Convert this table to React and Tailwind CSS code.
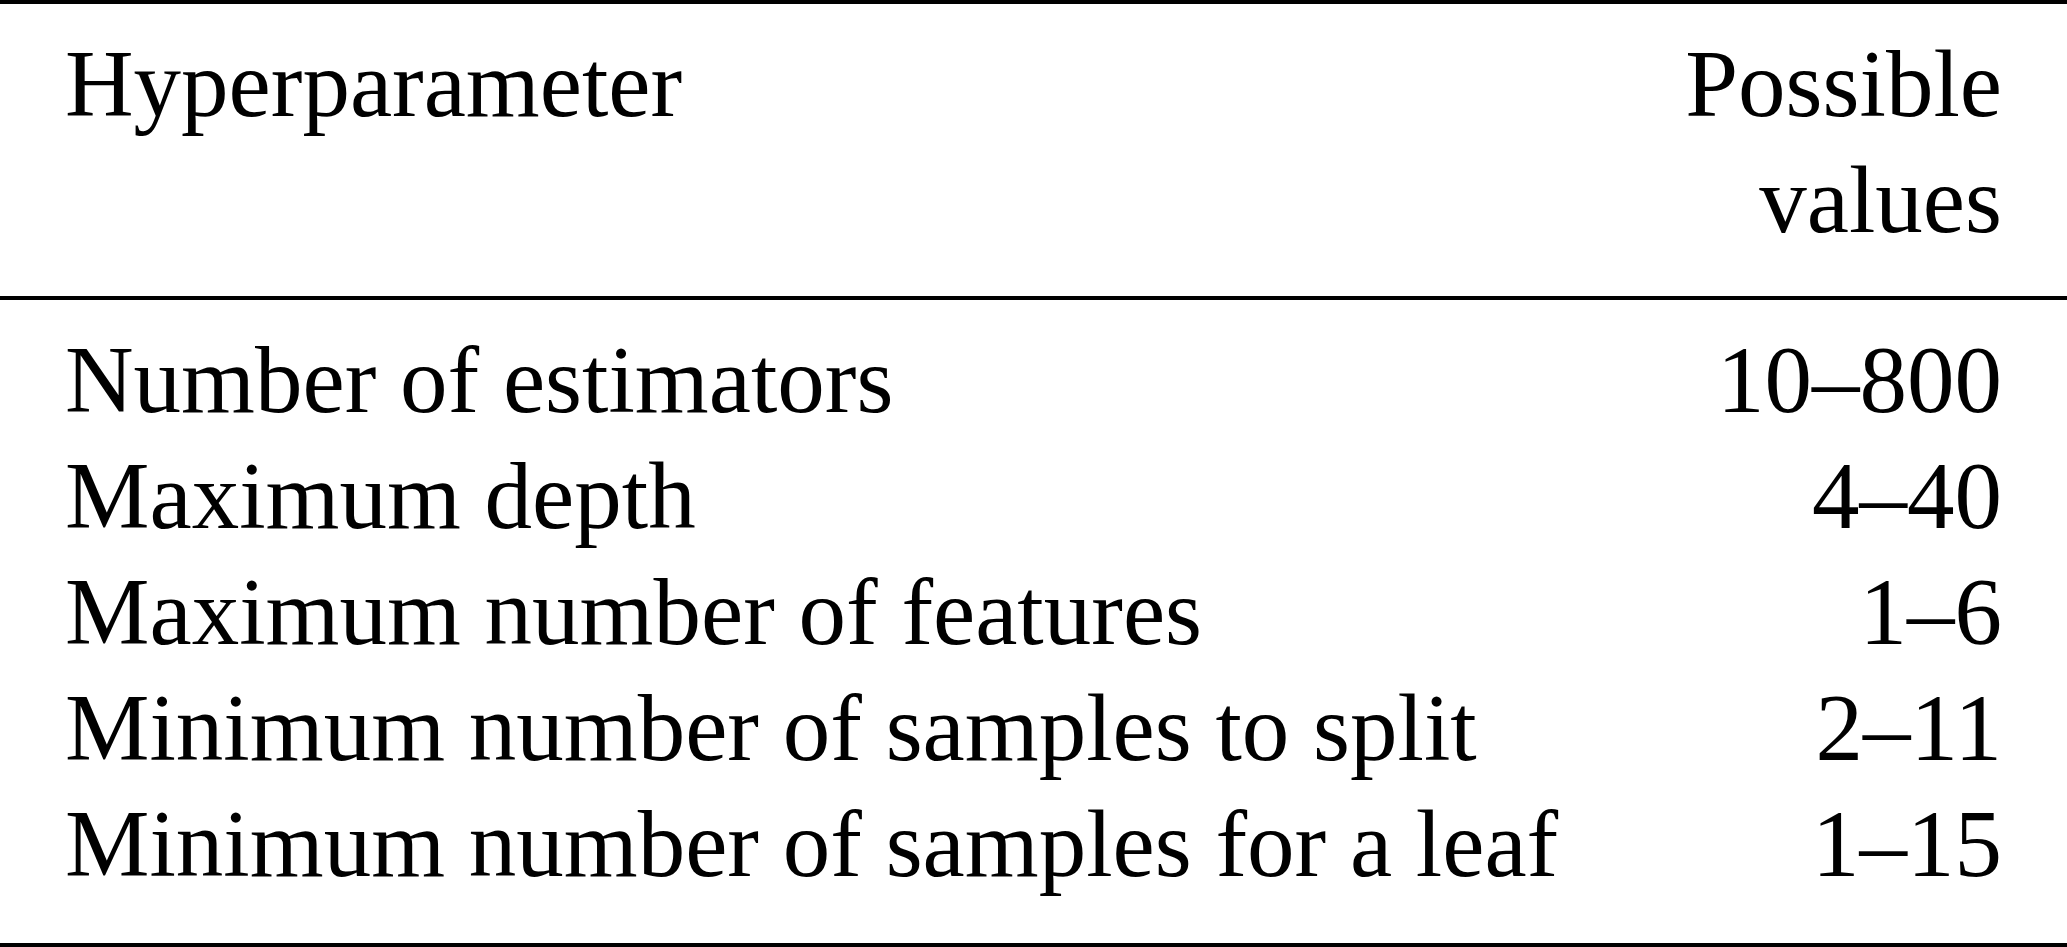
import React from 'react';

const rows = [
  ['Number of estimators', '10–800'],
  ['Maximum depth', '4–40'],
  ['Maximum number of features', '1–6'],
  ['Minimum number of samples to split', '2–11'],
  ['Minimum number of samples for a leaf', '1–15'],
];

export default function App() {
  return (
    <div className="w-[2067px] h-[947px] bg-white text-black text-[95px] leading-[116px] font-['Liberation_Serif','Times_New_Roman',serif]">
      {/* Header */}
      <div className="border-t-4 border-black flex justify-between px-[65px] pt-[22px] pb-[38px]">
        <div>Hyperparameter</div>
        <div className="text-right">
          Possible
          <br />
          values
        </div>
      </div>

      {/* Body */}
      <div className="border-t-4 border-b-4 border-black px-[65px] pt-[22px] pb-[41px]">
        {rows.map(([name, range]) => (
          <div key={name} className="flex justify-between">
            <span>{name}</span>
            <span className="text-right">{range}</span>
          </div>
        ))}
      </div>
    </div>
  );
}
